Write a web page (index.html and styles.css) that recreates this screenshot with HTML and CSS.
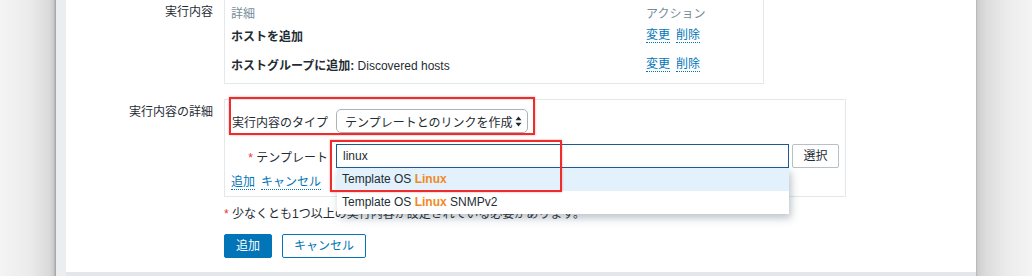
FILE: index.html
```html
<!DOCTYPE html>
<html lang="ja">
<head>
<meta charset="utf-8">
<title>実行内容</title>
<link rel="stylesheet" href="styles.css">
</head>
<body>
<div class="desk">
  <div class="shade-left"></div>
  <div class="window">
    <div class="page">
      <div class="form">
        <div class="label label-ops">実行内容</div>
        <div class="field">
          <div class="op-list">
            <div class="op-row op-head">
              <div class="op-detail">詳細</div>
              <div class="op-action">アクション</div>
            </div>
            <div class="op-row op-r1">
              <div class="op-detail"><b>ホストを追加</b></div>
              <div class="op-action"><a class="link">変更</a><a class="link">削除</a></div>
            </div>
            <div class="op-row op-r2">
              <div class="op-detail"><b>ホストグループに追加:</b> Discovered hosts</div>
              <div class="op-action"><a class="link">変更</a><a class="link">削除</a></div>
            </div>
          </div>
        </div>

        <div class="label label-details">実行内容の詳細</div>
        <div class="field field-details">
          <div class="details">
            <div class="inner-form">
              <div class="type-row">
                <div class="inner-label">実行内容のタイプ</div>
                <div class="select">
                  <span>テンプレートとのリンクを作成</span>
                  <svg class="arrows" width="7" height="11" viewBox="0 0 7 11"><path d="M3.5 0.5 L6.5 4.3 L0.5 4.3 Z M3.5 10.5 L6.5 6.7 L0.5 6.7 Z" fill="#1f2c33"/></svg>
                </div>
                <div class="mark mark-type"></div>
              </div>
              <div class="tpl-row">
                <div class="inner-label"><span class="req">*</span> テンプレート</div>
                <div class="tpl-field">
                  <div class="input-wrap">
                    <div class="input">linux</div>
                    <ul class="suggest">
                      <li class="active">Template OS <strong>Linux</strong></li>
                      <li>Template OS <strong>Linux</strong> SNMPv2</li>
                    </ul>
                  </div>
                  <div class="btn-grey">選択</div>
                </div>
                <div class="mark mark-tpl"></div>
              </div>
              <div class="links-row"><a class="link">追加</a><a class="link">キャンセル</a></div>
            </div>
          </div>
          <div class="hint"><span class="req">*</span> 少なくとも1つ以上の実行内容が設定されている必要があります。</div>
          <div class="buttons">
            <div class="btn-primary">追加</div>
            <div class="btn-alt">キャンセル</div>
          </div>
        </div>
      </div>
    </div>
    <div class="page-foot"></div>
  </div>
  <div class="shade-right"></div>
</div>
</body>
</html>
```

FILE: styles.css
```css
* { box-sizing: border-box; }
html, body { margin: 0; padding: 0; }
body {
  width: 1032px;
  height: 276px;
  overflow: hidden;
  font-family: "Liberation Sans", "Noto Sans CJK JP", sans-serif;
  font-size: 12px;
  color: #1f2c33;
}
.desk { display: flex; height: 276px; }
.shade-left {
  width: 56px;
  flex: none;
  background: linear-gradient(to right, #f4f4f4 0px, #ebebeb 30px, #d9d9d9 50px, #c9c9c9 54px, #a9a9a9 55px, #a9a9a9 56px);
}
.shade-right {
  flex: 1;
  background: linear-gradient(to right, #b4b4b4 0px, #cfcfcf 2px, #dcdcdc 10px, #ebebeb 30px, #f4f4f4 56px);
}
.window {
  width: 920px;
  flex: none;
  display: flex;
  flex-direction: column;
  background: #ebeef0;
  padding-left: 10px;
}
.page {
  height: 272px;
  background: #fff;
  flex: none;
}
.page-foot { flex: 1; background: #e4e7e9; }

.form {
  display: grid;
  grid-template-columns: 147px 1fr;
  column-gap: 11px;
}
.label { text-align: right; line-height: 18px; }
.label-ops { padding-top: 3px; }
.label-details { margin-top: 15px; padding-top: 4px; }
.field-details { margin-top: 15px; }

/* operations list */
.op-list {
  width: 540px;
  border: 1px solid #e4e8ea;
  border-top: none;
  padding: 0 6px 1px 6px;
}
.op-row { display: flex; align-items: center; }
.op-head { height: 24px; color: #768d99; }
.op-r1 { height: 22px; }
.op-r2 { height: 36px; }
.op-detail { width: 415px; }
.op-action { display: flex; gap: 6px; }
b { font-weight: bold; }

.link {
  color: #0275b8;
  text-decoration: none;
  border-bottom: 1px dotted #0275b8;
  line-height: 14px;
  display: inline-block;
}

/* details box */
.details {
  width: 622px;
  border: 1px solid #e4e8ea;
  padding: 9px 6px 5px 6px;
}
.inner-form { display: flex; flex-direction: column; }
.type-row, .tpl-row {
  position: relative;
  display: grid;
  grid-template-columns: 97px 1fr;
  column-gap: 8px;
  align-items: center;
  height: 24px;
}
.tpl-row { margin-top: 11px; z-index: 2; }
.inner-label { text-align: right; white-space: nowrap; }
.req { color: #e33734; }
.select {
  width: 192px;
  height: 24px;
  border: 1px solid #aab4ba;
  border-radius: 5px;
  display: flex;
  align-items: center;
  justify-content: space-between;
  padding: 0 5px 0 8px;
  background: #fff;
}
.arrows { display: block; }
.tpl-field { display: flex; gap: 3px; }
.input-wrap { position: relative; flex: 1; }
.input {
  height: 24px;
  border: 1px solid #1d5b8e;
  padding: 0 6px;
  line-height: 22px;
}
.btn-grey {
  width: 47px;
  height: 24px;
  border: 1px solid #b6c0c5;
  border-radius: 2px;
  text-align: center;
  line-height: 22px;
}
.suggest {
  position: absolute;
  left: 1px;
  right: 0;
  top: 100%;
  margin: 0;
  padding: 0;
  list-style: none;
  background: #fff;
  box-shadow: 2px 4px 8px rgba(60, 80, 100, 0.35);
  z-index: 3;
}
.suggest li {
  height: 23px;
  line-height: 23px;
  padding-left: 5px;
}
.suggest li.active { background: #e2f1fb; }
.suggest strong { color: #f08a24; font-weight: bold; }

.links-row { margin-top: 5px; height: 18px; display: flex; gap: 6px; align-items: center; }

.mark {
  position: absolute;
  border: 2px solid #ee2c2c;
  box-shadow: 0 0 2px rgba(238, 44, 44, 0.45);
  pointer-events: none;
  z-index: 5;
}
.mark-type { left: -2px; top: -12px; width: 306px; height: 38px; }
.mark-tpl { left: 99px; top: -4px; width: 232px; height: 52px; }

.hint { margin-top: 8px; line-height: 18px; }
.buttons { margin-top: 11px; display: flex; gap: 10px; }
.btn-primary, .btn-alt {
  height: 24px;
  line-height: 22px;
  padding: 0 11px;
  border: 1px solid #0275b8;
  border-radius: 2px;
}
.btn-primary { background: #0275b8; color: #fff; }
.btn-alt { background: #fff; color: #0275b8; }
```
